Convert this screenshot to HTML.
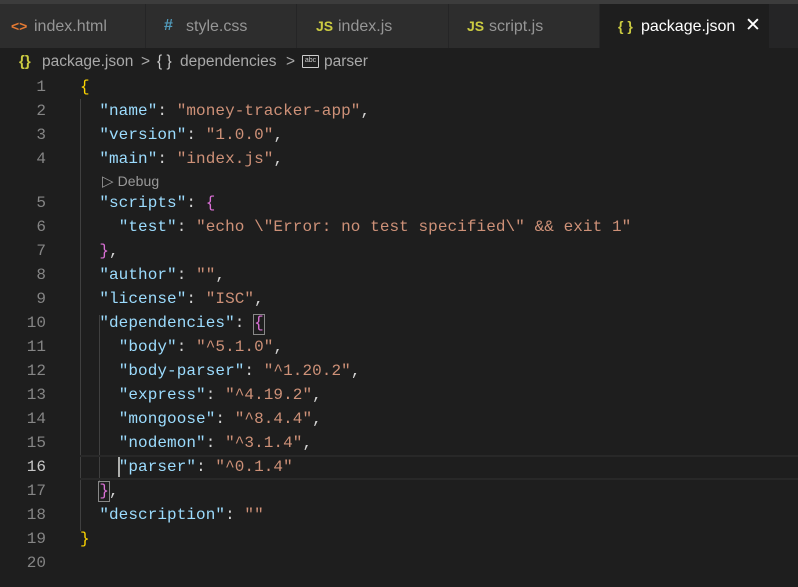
<!DOCTYPE html>
<html><head><style>
*{margin:0;padding:0;box-sizing:border-box}
body{width:798px;height:587px;background:#1e1e1e;overflow:hidden;font-family:"Liberation Sans",sans-serif;position:relative}
.top{position:absolute;left:0;top:0;width:798px;height:4px;background:#3c3c3c}
.tabs{position:absolute;left:0;top:4px;width:798px;height:44px;background:#252526}
.tab{position:absolute;top:0;height:44px;background:#2d2d2d;color:#969696;font-size:16px;line-height:46px;border-right:1px solid #252526}
.tab.act{background:#1e1e1e;color:#fff}
.tab span.i{position:absolute;top:0;font-weight:bold;font-size:14px;line-height:44px}
.bc{position:absolute;top:50px;height:24px;line-height:24px;color:#a9a9a9;font-size:15.5px;white-space:pre}
.code{position:absolute;left:0;top:75px;width:798px;font-family:"Liberation Mono",monospace;font-size:16px;letter-spacing:0.07px}
.ln{height:24px;line-height:24px;position:relative;white-space:pre}
.ln .n{position:absolute;right:752px;color:#858585;width:40px;text-align:right;letter-spacing:0}
.ln .t{position:absolute;left:80px;color:#d4d4d4}
.k{color:#9cdcfe}.s{color:#ce9178}.y{color:#ffd700}.p{color:#da70d6}
.lens{height:20px;line-height:20px;padding-left:102px;color:#999;font-family:"Liberation Sans",sans-serif;font-size:14px}
.g{position:absolute;width:1px;background:#404040}
</style></head><body>
<div class="top"></div>
<div class="tabs">
<div class="tab" style="left:0;width:146px"><span class="i" style="left:11px;color:#e37933">&lt;&gt;</span><span style="position:absolute;left:34px">index.html</span></div>
<div class="tab" style="left:146px;width:151px"><span class="i" style="left:18px;color:#519aba;font-size:16px">#</span><span style="position:absolute;left:40px">style.css</span></div>
<div class="tab" style="left:297px;width:152px"><span class="i" style="left:19px;color:#cbcb41">JS</span><span style="position:absolute;left:41px">index.js</span></div>
<div class="tab" style="left:449px;width:151px"><span class="i" style="left:18px;color:#cbcb41">JS</span><span style="position:absolute;left:40px">script.js</span></div>
<div class="tab act" style="left:600px;width:170px"><span class="i" style="left:18px;color:#cbcb41">{ }</span><span style="position:absolute;left:41px">package.json</span><span style="position:absolute;left:745px;left:145px;font-size:19px;line-height:44px">✕</span></div>
</div>
<div class="bc" style="left:19px;color:#cbcb41;font-weight:bold;font-size:15px">{}</div>
<div class="bc" style="left:42px">package.json</div>
<div class="bc" style="left:141px">&gt;</div>
<div class="bc" style="left:157px;color:#ccc">{ }</div>
<div class="bc" style="left:180px">dependencies</div>
<div class="bc" style="left:286px">&gt;</div>
<div style="position:absolute;left:302px;top:55px;width:17px;height:13px;border:1.5px solid #ccc;border-radius:1px;font-size:7px;line-height:10px;text-align:center;color:#ccc;font-family:'Liberation Sans',sans-serif">abc</div>
<div class="bc" style="left:324px">parser</div>
<div class="g" style="left:80px;top:99px;height:432px"></div>
<div class="g" style="left:99px;top:315px;height:168px"></div>
<div style="position:absolute;left:80px;top:455px;width:718px;height:25px;border-top:2px solid #282828;border-bottom:2px solid #282828"></div>
<div style="position:absolute;left:118px;top:457px;width:2px;height:20px;background:#aeafad"></div>
<div style="position:absolute;left:253px;top:314px;width:12px;height:21px;border:1px solid #888"></div>
<div style="position:absolute;left:98px;top:481px;width:12px;height:21px;border:1px solid #888"></div>
<div class="code">
<div class="ln"><span class="n">1</span><span class="t"><span class="y">{</span></span></div>
<div class="ln"><span class="n">2</span><span class="t">  <span class="k">"name"</span>: <span class="s">"money-tracker-app"</span>,</span></div>
<div class="ln"><span class="n">3</span><span class="t">  <span class="k">"version"</span>: <span class="s">"1.0.0"</span>,</span></div>
<div class="ln"><span class="n">4</span><span class="t">  <span class="k">"main"</span>: <span class="s">"index.js"</span>,</span></div>
<div class="lens"><span style="font-size:15px">▷</span> Debug</div>
<div class="ln"><span class="n">5</span><span class="t">  <span class="k">"scripts"</span>: <span class="p">{</span></span></div>
<div class="ln"><span class="n">6</span><span class="t">    <span class="k">"test"</span>: <span class="s">"echo \"Error: no test specified\" &amp;&amp; exit 1"</span></span></div>
<div class="ln"><span class="n">7</span><span class="t">  <span class="p">}</span>,</span></div>
<div class="ln"><span class="n">8</span><span class="t">  <span class="k">"author"</span>: <span class="s">""</span>,</span></div>
<div class="ln"><span class="n">9</span><span class="t">  <span class="k">"license"</span>: <span class="s">"ISC"</span>,</span></div>
<div class="ln"><span class="n">10</span><span class="t">  <span class="k">"dependencies"</span>: <span class="p">{</span></span></div>
<div class="ln"><span class="n">11</span><span class="t">    <span class="k">"body"</span>: <span class="s">"^5.1.0"</span>,</span></div>
<div class="ln"><span class="n">12</span><span class="t">    <span class="k">"body-parser"</span>: <span class="s">"^1.20.2"</span>,</span></div>
<div class="ln"><span class="n">13</span><span class="t">    <span class="k">"express"</span>: <span class="s">"^4.19.2"</span>,</span></div>
<div class="ln"><span class="n">14</span><span class="t">    <span class="k">"mongoose"</span>: <span class="s">"^8.4.4"</span>,</span></div>
<div class="ln"><span class="n">15</span><span class="t">    <span class="k">"nodemon"</span>: <span class="s">"^3.1.4"</span>,</span></div>
<div class="ln"><span class="n" style="color:#c6c6c6">16</span><span class="t">    <span class="k">"parser"</span>: <span class="s">"^0.1.4"</span></span></div>
<div class="ln"><span class="n">17</span><span class="t">  <span class="p">}</span>,</span></div>
<div class="ln"><span class="n">18</span><span class="t">  <span class="k">"description"</span>: <span class="s">""</span></span></div>
<div class="ln"><span class="n">19</span><span class="t"><span class="y">}</span></span></div>
<div class="ln"><span class="n">20</span><span class="t"></span></div>
</div>
</body></html>
